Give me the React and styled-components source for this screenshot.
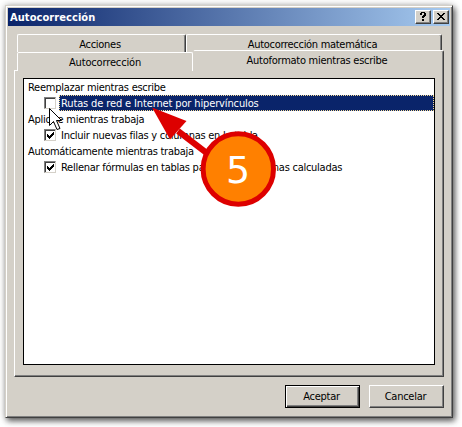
import React from 'react';
import styled, { createGlobalStyle, css } from 'styled-components';

const Global = createGlobalStyle`
  * { box-sizing: border-box; }
  body { margin: 0; background: #fff; overflow: hidden; }
`;

const Desktop = styled.main`
  position: relative;
  width: 462px;
  height: 427px;
  padding: 5px 0 0 5px;
  overflow: hidden;
  font: 11px/16px "DejaVu Sans Condensed", "DejaVu Sans", sans-serif;
  font-stretch: condensed;
  color: #000;
`;

const Dialog = styled.section`
  width: 448px;
  height: 413px;
  padding: 1px;
  background: #d4d0c8;
  border: 1px solid;
  border-color: #d4d0c8 #404040 #404040 #d4d0c8;
  box-shadow: inset 1px 1px #fff, inset -1px -1px #808080, 2px 3px 6px rgba(0, 0, 0, 0.6), 0 0 7px rgba(0, 0, 0, 0.22);
`;

const TitleBar = styled.header`
  display: flex;
  align-items: center;
  height: 18px;
  margin: 1px;
  padding: 0 2px;
  color: #fff;
  font-weight: bold;
  background: linear-gradient(90deg, #0a246a, #a6caf0);
`;

const Label = styled.span`
  display: inline-block;
  white-space: nowrap;
  letter-spacing: ${p => p.$track ?? -0.26}px;
`;

const TitleText = styled(Label)`
  padding-top: 1px;
  letter-spacing: 0.07px;
`;

const TitleActions = styled.div`
  display: flex;
  gap: 2px;
  margin-left: auto;
  margin-right: -1px;
`;

const raised = css`
  background: #d4d0c8;
  border: 1px solid;
  border-color: #fff #404040 #404040 #fff;
  box-shadow: inset -1px -1px #808080;
`;

const TitleButton = styled.button`
  ${raised}
  display: flex;
  width: 16px;
  height: 14px;
  padding: 0;
  svg { display: block; }
`;

const TabArea = styled.div`
  height: 37px;
  margin-top: 8px;
  padding-left: 10px;
`;

const TabRow = styled.div`
  display: flex;
  align-items: flex-end;
  height: ${p => p.$h}px;
  margin-top: ${p => p.$up || 0}px;
`;

const Tab = styled.div`
  position: relative;
  z-index: ${p => (p.$active ? 1 : 0)};
  width: ${p => p.$w}px;
  height: ${p => p.$h}px;
  padding-top: 2px;
  padding-right: ${p => (p.$flat ? 0 : 3)}px;
  text-align: center;
  background: #d4d0c8;
  border: solid;
  border-width: 1px 1px 0;
  border-color: #fff ${p => (p.$flat ? '#fff' : '#404040')} #fff #fff;
  border-radius: 2px 2px 0 0;
  box-shadow: ${p => (p.$flat ? 'none' : 'inset -1px 0 #808080')};
  ${p => p.$active && css`
    border-left-color: #d4d0c8;
  `}
`;

const Panel = styled.div`
  width: 430px;
  height: 307px;
  margin-left: 7px;
  margin-top: -1px;
  padding: 7px 8px;
  border: 1px solid;
  border-color: #fff #404040 #404040 #fff;
  box-shadow: inset -1px -1px #808080;
`;

const List = styled.div`
  width: 412px;
  height: 287px;
  border: 1px solid #000;
  background: #fff;
`;

const Heading = styled.div`
  height: 16px;
  padding-left: 4px;
  line-height: 18px;
`;

const Option = styled.div`
  display: flex;
  align-items: center;
  height: 16px;
  padding-left: 20px;
`;

const CheckBox = styled.span`
  flex: none;
  width: 12px;
  height: 12px;
  margin-right: 3px;
  background: #fff;
  border: 1px solid;
  border-color: #808080 #d4d0c8 #d4d0c8 #808080;
  box-shadow: inset 1px 1px #404040;
  svg { display: block; }
`;

const OptionText = styled.div`
  flex: 1;
  height: 16px;
  padding-left: 1px;
  line-height: 16px;
  border: 1px dotted transparent;
  ${p => p.$selected && css`
    color: #fff;
    background: #0a246a;
    border-color: #f5db95;
  `}
`;

const Footer = styled.footer`
  display: flex;
  justify-content: flex-end;
  gap: 9px;
  padding: 8px 7px 0 0;
`;

const PushButton = styled.button`
  ${raised}
  width: 75px;
  height: 23px;
  padding: 0 2px 0 0;
  color: #000;
  font: inherit;
  ${p => p.$default && css`
    border-color: #000;
    box-shadow: inset 1px 1px #fff, inset -1px -1px #404040, inset -2px -2px #808080;
  `}
`;

const Overlay = styled.svg`
  position: absolute;
  z-index: 2;
  inset: 0;
  pointer-events: none;
`;

const StepNumber = styled.text`
  fill: #fff;
  font-family: "DejaVu Sans", sans-serif;
  font-size: 38px;
  font-stretch: normal;
  text-anchor: middle;
`;

const Check = () => (
  <svg width="10" height="10" shapeRendering="crispEdges">
    <path d="M2 4h1v1h1v1h1v-1h1v-1h1v-1h1v-1h1v3h-1v1h-1v1h-1v1h-1v1h-1v-1h-1v-1h-1z" />
  </svg>
);

const Item = ({ selected, checked, track, children }) => (
  <Option>
    <CheckBox>{checked && <Check />}</CheckBox>
    <OptionText $selected={selected}><Label $track={track}>{children}</Label></OptionText>
  </Option>
);

export default function App() {
  return (
    <Desktop>
      <Global />
      <Dialog>
        <TitleBar>
          <TitleText>Autocorrección</TitleText>
          <TitleActions>
            <TitleButton aria-label="Ayuda">
              <svg width="14" height="12" shapeRendering="crispEdges">
                <path d="M4 2h1v-1h4v1h1v3h-1v1h-1v1h-2v-2h1v-1h1v-2h-2v2h-2zM6 8h2v2h-2z" />
              </svg>
            </TitleButton>
            <TitleButton aria-label="Cerrar">
              <svg width="14" height="12" shapeRendering="crispEdges">
                <path d="M3 2h2v1h1v1h2v-1h1v-1h2v1h-1v1h-1v1h-1v1h1v1h1v1h1v1h-2v-1h-1v-1h-2v1h-1v1h-2v-1h1v-1h1v-1h1v-1h-1v-1h-1v-1h-1z" />
              </svg>
            </TitleButton>
          </TitleActions>
        </TitleBar>
        <TabArea>
          <TabRow $h={18}>
            <Tab $w={169} $h={18}><Label>Acciones</Label></Tab>
            <Tab $w={256} $h={18}><Label $track={-0.3}>Autocorrección matemática</Label></Tab>
          </TabRow>
          <TabRow $h={21} $up={-2}>
            <Tab $w={176} $h={19} $flat><Label $track={-0.15}>Autocorrección</Label></Tab>
            <Tab $w={251} $h={21} $active><Label>Autoformato mientras escribe</Label></Tab>
          </TabRow>
        </TabArea>
        <Panel>
          <List>
            <Heading><Label>Reemplazar mientras escribe</Label></Heading>
            <Item selected track={-0.13}>Rutas de red e Internet por hipervínculos</Item>
            <Heading><Label>Aplique mientras trabaja</Label></Heading>
            <Item checked>Incluir nuevas filas y columnas en la tabla</Item>
            <Heading><Label>Automáticamente mientras trabaja</Label></Heading>
            <Item checked>Rellenar fórmulas en tablas para crear columnas calculadas</Item>
          </List>
        </Panel>
        <Footer>
          <PushButton $default><Label>Aceptar</Label></PushButton>
          <PushButton><Label>Cancelar</Label></PushButton>
        </Footer>
      </Dialog>
      <Overlay width="462" height="427">
        <path d="M49.5 108.5v17l4-4 3.5 8 3-1-3.5-8h5z" fill="#fff" stroke="#000" />
        <path d="M178 131L208 154" stroke="#d00" strokeWidth="6" />
        <path d="M152 107.5L186.5 121L170 139.5z" fill="#d00" />
        <circle cx="238.3" cy="169" r="35.2" fill="#ff8000" stroke="#d00" strokeWidth="5" />
        <StepNumber x="238" y="183">5</StepNumber>
      </Overlay>
    </Desktop>
  );
}
